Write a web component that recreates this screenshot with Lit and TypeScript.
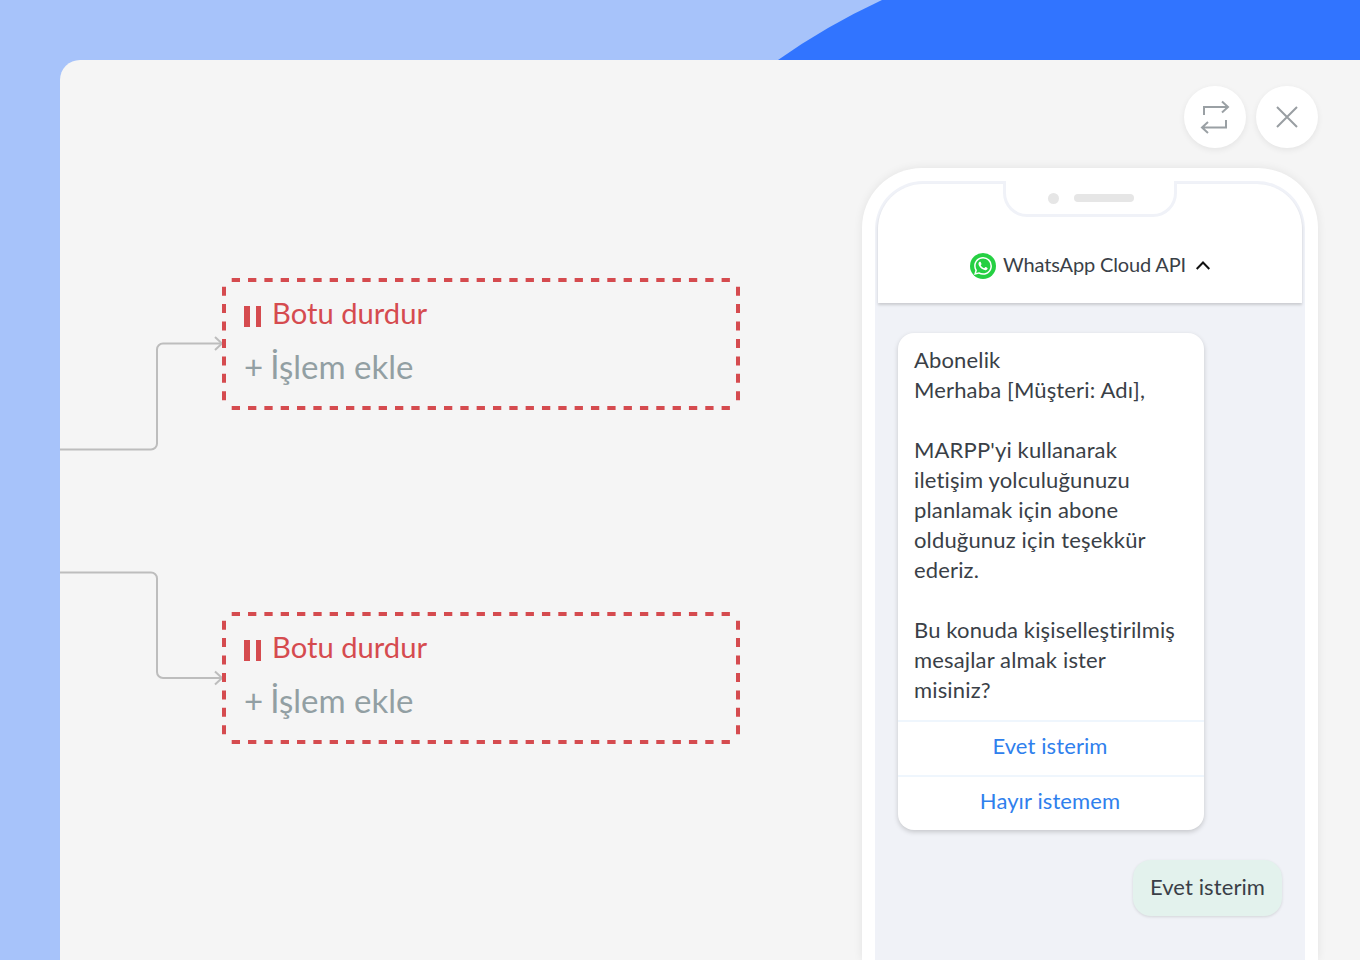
import { LitElement, html, css } from "lit";
import { customElement } from "lit/decorators.js";

const WA = "M17.472 14.382c-.297-.149-1.758-.867-2.03-.967-.273-.099-.471-.148-.67.15-.197.297-.767.966-.94 1.164-.173.199-.347.223-.644.075-.297-.15-1.255-.463-2.39-1.475-.883-.788-1.48-1.761-1.653-2.059-.173-.297-.018-.458.13-.606.134-.133.298-.347.446-.52.149-.174.198-.298.298-.497.099-.198.05-.371-.025-.52-.075-.149-.669-1.612-.916-2.207-.242-.579-.487-.5-.669-.51-.173-.008-.371-.01-.57-.01-.198 0-.52.074-.792.372-.272.297-1.04 1.016-1.04 2.479 0 1.462 1.065 2.875 1.213 3.074.149.198 2.096 3.2 5.077 4.487.709.306 1.262.489 1.694.625.712.227 1.36.195 1.871.118.571-.085 1.758-.719 2.006-1.413.248-.694.248-1.289.173-1.413-.074-.124-.272-.198-.57-.347m-5.421 7.403h-.004a9.87 9.87 0 01-5.031-1.378l-.361-.214-3.741.982.998-3.648-.235-.374a9.86 9.86 0 01-1.51-5.26c.001-5.45 4.436-9.884 9.888-9.884 2.64 0 5.122 1.03 6.988 2.898a9.825 9.825 0 012.893 6.994c-.003 5.45-4.437 9.884-9.885 9.884m8.413-18.297A11.815 11.815 0 0012.05 0C5.495 0 .16 5.335.157 11.892c0 2.096.547 4.142 1.588 5.945L.057 24l6.305-1.654a11.882 11.882 0 005.683 1.448h.005c6.554 0 11.89-5.335 11.893-11.893a11.821 11.821 0 00-3.48-8.413z";

@customElement("app-root")
export class AppRoot extends LitElement {
  static styles = css`
    :host { display: block; position: relative; height: 960px; overflow: hidden; background: #a7c3fa; font-family: "Lato", "Noto Sans", sans-serif; box-sizing: border-box; padding: 60px 0 0 60px; }
    * { box-sizing: border-box; }
    .swoosh { position: absolute; top: 0; left: 0; display: block; }
    .panel { position: relative; height: 900px; background: #f5f5f5; border-radius: 20px 0 0 0; display: flex; flex-direction: column; align-items: flex-end; padding: 26px 42px 0 0; overflow: hidden; }
    .wires { position: absolute; left: 0; top: 0; display: block; }
    .node { position: absolute; left: 162px; width: 518px; height: 132px; padding: 15px 22px 0; display: flex; flex-direction: column; gap: 14px; }
    .n1 { top: 218px; }
    .n2 { top: 552px; }
    .frame { position: absolute; left: 0; top: 0; display: block; }
    .row { display: flex; align-items: center; height: 39px; }
    .stop { color: #d54b4f; font-size: 29.2px; gap: 11px; }
    .pause { display: flex; gap: 6px; width: 17px; height: 21px; margin-top: 8px; flex: none; }
    .pause i { display: block; width: 5.5px; background: #d54b4f; }
    .add { color: #929fa3; font-size: 33px; gap: 7px; }
    .actions { display: flex; gap: 10px; }
    .round { width: 62px; height: 62px; border-radius: 50%; background: #fff; box-shadow: 0 2px 6px rgba(0,0,0,.07); display: flex; align-items: center; justify-content: center; }
    .round svg { display: block; }
    .phone { margin-top: 20px; width: 456px; flex: 1; background: #fff; border-radius: 60px 60px 0 0; padding: 13px 13px 0; box-shadow: 0 0 10px rgba(0,0,0,.08); }
    .screen { position: relative; height: 100%; border: 3px solid #f0f2f8; border-bottom: 0; border-radius: 48px 48px 0 0; background: #f0f2f7; }
    .notch { position: absolute; top: -3px; left: 125px; width: 174px; height: 36px; background: #fff; border: 3px solid #f0f2f8; border-top: 0; border-radius: 0 0 24px 24px; display: flex; align-items: center; justify-content: center; gap: 15px; padding: 1px 0 0 2px; }
    .dot { width: 11px; height: 11px; border-radius: 50%; background: #e6e6e6; }
    .bar { width: 60px; height: 8px; border-radius: 4px; background: #e6e6e6; }
    .head { height: 119px; background: #fff; border-radius: 45px 45px 0 0; box-shadow: 0 2px 3px rgba(0,0,0,.16); display: flex; align-items: flex-end; justify-content: center; padding-bottom: 24px; gap: 7px; }
    .wa { width: 26px; height: 26px; border-radius: 50%; background: #25d042; display: flex; align-items: center; justify-content: center; flex: none; }
    .title { font-size: 20px; letter-spacing: -0.15px; line-height: 26px; margin-bottom: 2px; color: #3a3f47; }
    .chev { margin-left: 3px; margin-bottom: 9px; display: block; }
    .chat { padding: 30px 20px 0; display: flex; flex-direction: column; }
    .card { width: 306px; background: #fff; border-radius: 16px; box-shadow: 0 2px 5px rgba(0,0,0,.18); overflow: hidden; }
    .msg { padding: 12px 16px 15px; font-size: 22px; letter-spacing: 0.15px; line-height: 30px; color: #3a3f47; white-space: pre-line; }
    .btn { height: 55px; border-top: 2px solid #eff6fd; color: #2f80ed; font-size: 22px; letter-spacing: 0.1px; display: flex; align-items: center; justify-content: center; padding: 0 2px 7px 0; }
    .reply { align-self: flex-end; margin-top: 30px; width: 149px; height: 56px; border-radius: 18px; background: #e3f2ed; color: #3a3f47; font-size: 22px; letter-spacing: 0.1px; display: flex; align-items: center; justify-content: center; padding-bottom: 4px; box-shadow: 0 1px 3px rgba(0,0,0,.12); }
  `;

  private node(cls: string) {
    return html`<div class="node ${cls}">
      <svg class="frame" width="518" height="132" viewBox="0 0 518 132" fill="none" stroke="#d54b4f" stroke-width="4">
        <path stroke-dasharray="8.3 8.03" d="M9.700 2H508.500M9.700 130H508.500"/>
        <path stroke-dasharray="9 8.42" d="M2 8.700V122.700M516 8.700V122.700"/>
      </svg>
      <div class="row stop"><span class="pause"><i></i><i></i></span><span>Botu durdur</span></div>
      <div class="row add"><span>+</span><span>İşlem ekle</span></div>
    </div>`;
  }

  render() {
    const msg = `Abonelik
Merhaba [Müşteri: Adı],

MARPP'yi kullanarak
iletişim yolculuğunuzu
planlamak için abone
olduğunuz için teşekkür
ederiz.

Bu konuda kişiselleştirilmiş
mesajlar almak ister
misiniz?`;
    return html`
      <svg class="swoosh" width="1360" height="60" viewBox="0 0 1360 60"><path d="M778 60Q826 26 882 0H1360V60Z" fill="#3174ff"/></svg>
      <div class="panel">
        <svg class="wires" width="200" height="700" viewBox="0 0 200 700" fill="none" stroke="#bdbdbd" stroke-width="2">
          <path d="M0 389.5H91a6 6 0 0 0 6-6V289.5a6 6 0 0 1 6-6H161"/>
          <path d="M155 277l7 6.5l-7 6.5"/>
          <path d="M0 512.5H91a6 6 0 0 1 6 6V612a6 6 0 0 0 6 6H161"/>
          <path d="M155 611.5l7 6.5l-7 6.5"/>
        </svg>
        ${this.node("n1")}
        ${this.node("n2")}
        <div class="actions">
          <div class="round">
            <svg width="32" height="36" viewBox="0 0 32 36" fill="none" stroke="#9aa0a4" stroke-width="2"><path d="M5 16V8H29M23 2.500l6 5.500l-6 5.500"/><path d="M27 21V28.500H3M9 23l-6 5.500l6 5.500"/></svg>
          </div>
          <div class="round">
            <svg width="24" height="24" viewBox="0 0 24 24" fill="none" stroke="#999ea2" stroke-width="2"><path d="M2 2L22 22M22 2L2 22"/></svg>
          </div>
        </div>
        <div class="phone">
          <div class="screen">
            <div class="head">
              <span class="wa"><svg width="18" height="18" viewBox="0 0 24 24"><path fill="#fff" d="${WA}"/></svg></span>
              <span class="title">WhatsApp Cloud API</span>
              <svg class="chev" width="14" height="9" viewBox="0 0 14 9" fill="none" stroke="#111" stroke-width="2"><path d="M.7 8L7 1.500L13.300 8"/></svg>
            </div>
            <div class="notch"><span class="dot"></span><span class="bar"></span></div>
            <div class="chat">
              <div class="card">
                <div class="msg">${msg}</div>
                <div class="btn">Evet isterim</div>
                <div class="btn">Hayır istemem</div>
              </div>
              <div class="reply">Evet isterim</div>
            </div>
          </div>
        </div>
      </div>
    `;
  }
}
